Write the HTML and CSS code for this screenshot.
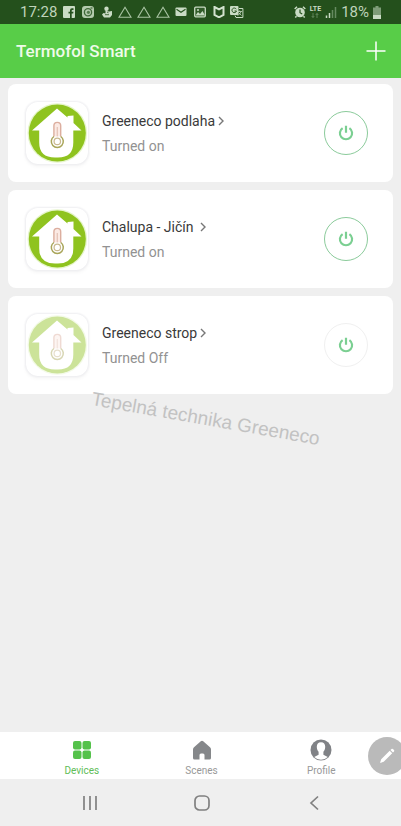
FILE: index.html
```html
<!DOCTYPE html>
<html lang="en">
<head>
<meta charset="utf-8">
<meta name="viewport" content="width=device-width, initial-scale=1">
<title>Termofol Smart</title>
<link rel="stylesheet" href="styles.css">
</head>
<body>
<svg class="defs" aria-hidden="true">
  <symbol id="house" viewBox="0 0 62 62">
    <circle cx="31.300" cy="31" r="29.800" fill="#e6f5cb"/>
    <circle cx="31.300" cy="31" r="28.500" fill="#8fc31f"/>
    <path d="M31 6.500 41.500 15.500V14L47.500 13.500V21L55.500 28.500H47.300V40.500Q47.300 55.500 32 55.500H29Q13.200 55.500 13.200 40.500V28.500H6Z" fill="#fff"/>
    <path d="M27.900 35V23.800a3.400 3.400 0 0 1 6.800 0V35" fill="#fbeae4" stroke="#dcae9f" stroke-width="1.400"/>
    <path d="M31.300 25v10" stroke="#e5c4b8" stroke-width="1.300"/>
    <path d="M27.900 34.500a6 6 0 1 0 6.800 0" fill="#fff" stroke="#a9a559" stroke-width="1.500"/>
    <circle cx="31.300" cy="39.400" r="3.200" fill="none" stroke="#c9b890" stroke-width="1.200"/>
  </symbol>
  <symbol id="power" viewBox="0 0 16 16">
    <path d="M4.600 3.100a6.100 6.100 0 1 0 6.800 0M8 .800v7" fill="none" stroke="#7bcf92" stroke-width="2.200"/>
  </symbol>
  <symbol id="chevron" viewBox="0 0 6 10">
    <path d="M1 1l4 4-4 4" fill="none" stroke="#777" stroke-width="1.400"/>
  </symbol>
  <symbol id="triangle" viewBox="0 0 14 12">
    <path d="M7 1.200 13 11.200H1Z" fill="none" stroke="#a9c3a3" stroke-width="1.100"/>
  </symbol>
</svg>

<div class="screen">
  <div class="status">
    <span class="clock">17:28</span>
    <div class="notices">
      <svg width="14" height="12" viewBox="-1 0 14 12"><rect width="12" height="12" rx="1" fill="#c9dbc4"/><path d="M7 12V7.500H5.500V5.700H7V4.200Q7 2.200 9 2.200h1.500V4H9.300Q8.700 4 8.700 4.600v1.100h1.800l-.3 1.800H8.700V12Z" fill="#24501c"/></svg>
      <svg width="14" height="12" viewBox="-1 0 14 12"><rect width="12" height="12" rx="3" fill="#b4cbae"/><circle cx="6" cy="6.300" r="3.600" fill="none" stroke="#3f6838" stroke-width="1.300"/><circle cx="6.400" cy="6.300" r="1.600" fill="#557c4e"/><path d="M8.500 2h2" stroke="#24501c"/></svg>
      <svg width="14" height="12" viewBox="-1 0 14 12"><circle cx="5.500" cy="2.700" r="2.200" fill="#c9dbc4"/><path d="M4.500 4.500 8 5.500l3-.5v4L9 11.500H3L1 8.500 2.500 7 4.500 7.500Z" fill="#c9dbc4"/><path d="M4 8.700h4M6 6l1.500.8" stroke="#24501c" stroke-width=".8"/></svg>
      <svg width="14" height="12"><use href="#triangle"/></svg>
      <svg width="14" height="12"><use href="#triangle"/></svg>
      <svg width="14" height="12"><use href="#triangle"/></svg>
      <svg width="14" height="12" viewBox="-1 0 14 12"><rect x=".5" y="1.500" width="11" height="8.500" rx="1" fill="#c9dbc4"/><path d="M1.500 3.300 6 6.300l4.500-3" fill="none" stroke="#24501c" stroke-width="1.100"/></svg>
      <svg width="14" height="12" viewBox="-1 0 14 12"><rect x=".7" y="1.200" width="10.600" height="9.600" rx="1" fill="#315c29" stroke="#c9dbc4" stroke-width="1.300"/><path d="M1.500 9.500 4 6l2 2 2.500-3 2.500 4.500Z" fill="#c9dbc4"/><circle cx="4" cy="4" r="1" fill="#c9dbc4"/></svg>
      <svg width="14" height="12" viewBox="-1 0 14 12"><path d="M1.500 1 6 3.300 10.500 1v8L6 11.300 1.500 9Z" fill="none" stroke="#d2e2ce" stroke-width="2"/></svg>
      <svg width="14" height="12" viewBox="0 0 14 12"><rect width="8.500" height="9" rx="1" fill="#c9dbc4"/><path d="M6.300 3.200A2.300 2.300 0 1 0 6.500 5H4.500" fill="none" stroke="#24501c"/><path d="M9 2.500h3.900v9H6L5 9.500" fill="none" stroke="#c9dbc4"/><path d="M7.500 5.500H12M9.700 4.500v1M11 5.800Q10 8.500 7.500 9.500M8.500 6.500l3 3" fill="none" stroke="#c9dbc4" stroke-width=".8"/></svg>
    </div>
    <div class="signals">
      <svg width="12" height="12" viewBox="0 0 12 12"><circle cx="6" cy="6.500" r="4.800" fill="#c9dbc4"/><path d="M.7 3 3 .8M11.300 3 9 .8M2.500 10.200 1.300 11.500M9.500 10.200l1.200 1.300" stroke="#c9dbc4" stroke-width="1.500"/><path d="M6 3.500v3.200l2.200 1.300" fill="none" stroke="#24501c" stroke-width="1.200"/></svg>
      <div class="lte"><span>LTE</span><svg width="8" height="5" viewBox="0 0 8 5"><path d="M2 0v4.500M.7 3 2 4.500 3.300 3M6 5V.5M4.700 2 6 .5 7.300 2" fill="none" stroke="#6f9269" stroke-width=".8"/></svg></div>
      <svg width="12" height="12" viewBox="0 0 12 12"><path d="M1.500 12V9.500M4.500 12V7" stroke="#c9dbc4" stroke-width="1.500"/><path d="M7.500 12V4M10.500 12V1" stroke="#668a60" stroke-width="1.500"/></svg>
      <span class="clock">18%</span>
      <svg width="8" height="13" viewBox="0 0 8 13"><path d="M2.500 0h3v1.500H8V9H0V1.500h2.500Z" fill="#7e9d78"/><path d="M0 9h8v4H0Z" fill="#c9dbc4"/></svg>
    </div>
  </div>

  <header class="header">
    <h1>Termofol Smart</h1>
    <button class="add" aria-label="Add device"><svg width="20" height="20" viewBox="0 0 20 20"><path d="M10 .5v19M.5 10h19" stroke="#fff" stroke-width="1.500"/></svg></button>
  </header>

  <main class="devices">
    <article class="card">
      <div class="thumb"><svg><use href="#house"/></svg></div>
      <div class="info">
        <a class="name" href="#podlaha">Greeneco podlaha<svg width="6" height="10"><use href="#chevron"/></svg></a>
        <p>Turned on</p>
      </div>
      <button class="power on" aria-label="Turn off Greeneco podlaha"><svg width="16" height="16"><use href="#power"/></svg></button>
    </article>
    <article class="card">
      <div class="thumb"><svg><use href="#house"/></svg></div>
      <div class="info">
        <a class="name spaced" href="#chalupa">Chalupa - Jičín<svg width="6" height="10"><use href="#chevron"/></svg></a>
        <p>Turned on</p>
      </div>
      <button class="power on" aria-label="Turn off Chalupa - Jičín"><svg width="16" height="16"><use href="#power"/></svg></button>
    </article>
    <article class="card">
      <div class="thumb faded"><svg><use href="#house"/></svg></div>
      <div class="info">
        <a class="name" href="#strop">Greeneco strop<svg width="6" height="10"><use href="#chevron"/></svg></a>
        <p>Turned Off</p>
      </div>
      <button class="power" aria-label="Turn on Greeneco strop"><svg width="16" height="16"><use href="#power"/></svg></button>
    </article>
    <div class="watermark">Tepelná technika Greeneco</div>
  </main>

  <nav class="tabs">
    <a class="active" href="#devices"><svg width="22" height="22" viewBox="0 0 22 22" fill="#55c24b"><rect x="2" y="2" width="8.500" height="8.500" rx="2"/><rect x="11.500" y="2" width="8.500" height="8.500" rx="2"/><rect x="2" y="11.500" width="8.500" height="8.500" rx="2"/><rect x="11.500" y="11.500" width="8.500" height="8.500" rx="2"/></svg>Devices</a>
    <a href="#scenes"><svg width="22" height="22" viewBox="0 0 22 22"><path d="M9.800 2.300Q11 1.300 12.200 2.300L19 8.200Q20 9 20 10.500V19q0 1.500-1.500 1.500H13.500V16q0-1.500-1.500-1.500h-2Q8.500 14.500 8.500 16v4.500H3.500Q2 20.500 2 19v-8.500Q2 9 3 8.200Z" fill="#85878a"/></svg>Scenes</a>
    <a href="#profile"><svg width="22" height="22" viewBox="0 0 22 22"><circle cx="11" cy="11" r="10.500" fill="#808286"/><path d="M11 3.200c-3 0-4.300 2-4.200 4.800.1 2.500 1 3.700 1.800 4.700v3L4.200 18a9.800 9.800 0 0 0 13.600 0l-4.400-2.300v-3c.8-1 1.700-2.200 1.800-4.700.1-2.800-1.200-4.800-4.200-4.800Z" fill="#fff"/></svg>Profile</a>
    <button class="edit" aria-label="Edit"><svg width="16" height="16" viewBox="0 0 16 16"><path d="M1 15l1.200-3.700 8.500-8.500 2.500 2.500-8.500 8.500ZM11.500 2l1-1q.7-.6 1.400 0l1.100 1.100q.6.7 0 1.400l-1 1Z" fill="#fff"/></svg></button>
  </nav>

  <div class="system">
    <button aria-label="Recent apps"><svg width="16" height="16" viewBox="0 0 16 16"><path d="M2 1v14M8 1v14M14 1v14" stroke="#808080" stroke-width="1.700"/></svg></button>
    <button aria-label="Home"><svg width="16" height="16" viewBox="0 0 16 16"><rect x="1" y="1" width="14" height="14" rx="4.500" fill="none" stroke="#808080" stroke-width="1.700"/></svg></button>
    <button aria-label="Back"><svg width="16" height="16" viewBox="0 0 16 16"><path d="M12 1.500 5 8l7 6.500" fill="none" stroke="#808080" stroke-width="1.700"/></svg></button>
  </div>
</div>
</body>
</html>
```
FILE: styles.css
```css
* {
  box-sizing: border-box;
}

body {
  margin: 0;
  background: #efefef;
  font-family: Roboto, "Liberation Sans", sans-serif;
}

svg {
  display: block;
  flex: none;
}

button {
  display: flex;
  align-items: center;
  justify-content: center;
  padding: 0;
  border: 0;
  background: none;
}

a {
  color: inherit;
  text-decoration: none;
}

.defs {
  position: absolute;
  width: 0;
  height: 0;
}

.screen {
  display: flex;
  flex-direction: column;
  min-height: 100vh;
}

.status {
  display: flex;
  align-items: center;
  height: 24px;
  padding: 0 20px;
  background: #24501c;
}

.clock {
  color: #bfd3ba;
  font-size: 15px;
  line-height: 24px;
}

.notices {
  display: flex;
  align-items: center;
  justify-content: space-between;
  width: 182px;
  margin-left: 5px;
}

.signals {
  display: flex;
  align-items: center;
  gap: 4px;
  margin-left: auto;
}

.lte {
  display: flex;
  flex-direction: column;
  align-items: center;
  color: #c9dbc4;
  font-size: 7px;
  font-weight: 700;
  line-height: 7px;
}

.header {
  display: flex;
  align-items: center;
  justify-content: space-between;
  height: 54px;
  padding: 0 15px 0 16px;
  background: #58cd48;
}

h1 {
  margin: 0;
  color: #effbe9;
  font-size: 17px;
  font-weight: 500;
  line-height: 24px;
}

.devices {
  position: relative;
  display: flex;
  flex: 1;
  flex-direction: column;
  gap: 8px;
  padding: 6px 8px;
}

.card {
  display: flex;
  align-items: center;
  height: 98px;
  padding: 0 25px 0 18px;
  border-radius: 8px;
  background: #fff;
}

.thumb {
  width: 62px;
  height: 62px;
  border-radius: 12px;
  box-shadow: 0 0 2px 1px #eeeef1, 0 2px 4px #f2f2f2;
}

.thumb svg {
  width: 62px;
  height: 62px;
}

.faded svg {
  opacity: 0.45;
}

.info {
  flex: 1;
  margin-left: 14px;
}

.name {
  display: flex;
  align-items: center;
  gap: 3px;
  color: #3a3a3a;
  font-size: 14px;
  line-height: 20px;
}

.spaced {
  gap: 6px;
}

.info p {
  margin: 5px 0 0;
  color: #929292;
  font-size: 14px;
  line-height: 20px;
}

.power {
  width: 44px;
  height: 44px;
  border: 1px solid #f0f0f0;
  border-radius: 50%;
}

.power.on {
  border-color: #8bcb9b;
}

.watermark {
  position: absolute;
  top: 329px;
  left: 90px;
  color: #c2c2c2;
  font-family: "Liberation Sans", sans-serif;
  font-size: 19px;
  line-height: 24px;
  white-space: nowrap;
  transform: rotate(10deg);
}

.tabs {
  position: relative;
  display: flex;
  height: 47px;
  padding: 0 20px 0 22px;
  overflow: hidden;
  background: #fff;
}

.tabs a {
  display: flex;
  flex: 1;
  flex-direction: column;
  align-items: center;
  gap: 4px;
  padding-top: 7px;
  color: #999;
  font-size: 10px;
  line-height: 12px;
}

.tabs .active {
  color: #60bd57;
}

.edit {
  position: absolute;
  top: 5px;
  right: -5px;
  width: 38px;
  height: 38px;
  border-radius: 50%;
  background: #bababa;
}

.system {
  display: flex;
  height: 47px;
  padding: 0 31px 0 34px;
}

.system button {
  flex: 1;
}
```
